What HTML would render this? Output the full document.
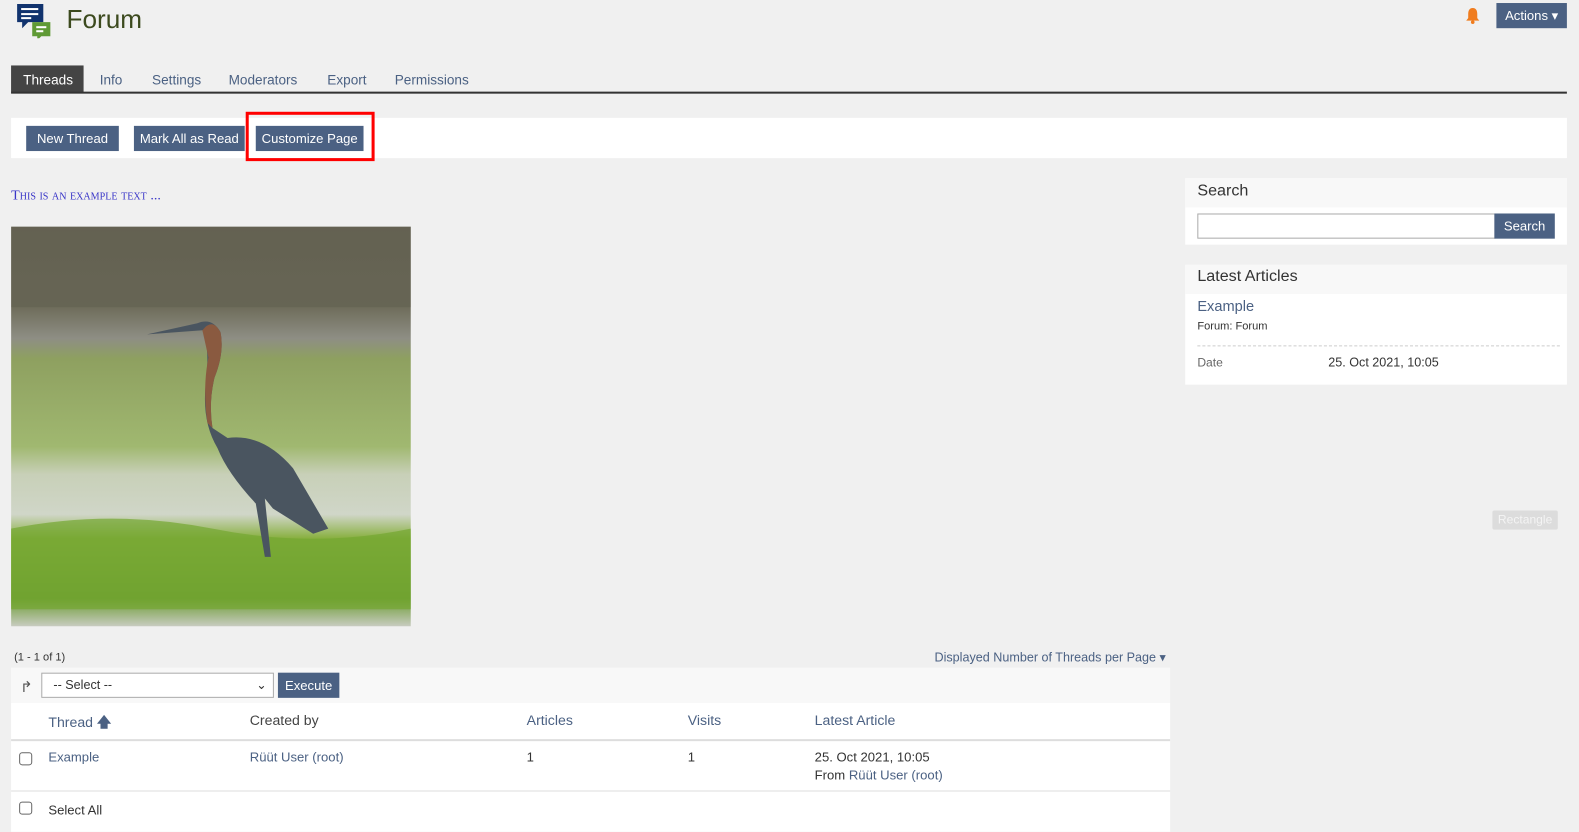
<!DOCTYPE html>
<html><head><meta charset="utf-8"><style>
*{box-sizing:border-box;margin:0;padding:0}
body{width:1579px;height:832px;background:#f0f0f0;font-family:"Liberation Sans",sans-serif;font-size:13px;color:#333;position:relative;overflow:hidden}
#w{position:absolute;left:0;top:0;width:1568px;height:826px;transform:scale(1.007);transform-origin:0 0}
.a{position:absolute}
.btn{position:absolute;background:#4b6183;color:#fff;font-size:13px;line-height:25px;text-align:center;height:25px}
.lnk{color:#4b6183}
.tab{position:absolute;top:72px;font-size:13.5px;color:#4b6183}
</style></head><body><div id="w">
<svg class="a" style="left:16px;top:3px" width="36" height="35" viewBox="0 0 36 35">
<path d="M1 1h26v18H12l-6 6v-6H1z" fill="#11336e"/>
<rect x="5" y="5" width="17" height="2" fill="#fff"/><rect x="5" y="10" width="17" height="2" fill="#fff"/><rect x="5" y="14" width="10" height="2" fill="#fff"/>
<path d="M16 19h18v14h-9l-4 4v-4h-5z" fill="#5f9a35"/>
<rect x="20" y="23" width="10" height="2" fill="#fff"/><rect x="20" y="27" width="7" height="2" fill="#fff"/>
</svg>
<div class="a" style="left:66px;top:4px;font-size:26px;color:#3c4a1e">Forum</div>
<svg class="a" style="left:1455px;top:7px" width="15" height="17" viewBox="0 0 15 17"><path d="M7.5 1C4 1 3 4 3 7v4L1 13.5h13L12 11V7c0-3-1-6-4.5-6z" fill="#f07c1e"/><circle cx="7.5" cy="15" r="1.8" fill="#f07c1e"/></svg>
<div class="btn" style="left:1486px;top:3px;width:70px;height:25px">Actions &#9662;</div>

<div class="a" style="left:11px;top:65px;width:72px;height:27px;background:#444"></div>
<div class="tab" style="left:23px;color:#fff">Threads</div>
<div class="tab" style="left:99px">Info</div>
<div class="tab" style="left:151px">Settings</div>
<div class="tab" style="left:227px">Moderators</div>
<div class="tab" style="left:325px">Export</div>
<div class="tab" style="left:392px">Permissions</div>
<div class="a" style="left:11px;top:91px;width:1545px;height:2px;background:#333"></div>

<div class="a" style="left:11px;top:117px;width:1545px;height:40px;background:#fff"></div>
<div class="btn" style="left:26px;top:125px;width:92px">New Thread</div>
<div class="btn" style="left:133px;top:125px;width:110px">Mark All as Read</div>
<div class="a" style="left:244px;top:111px;width:128px;height:49px;border:3px solid #f00"></div>
<div class="btn" style="left:254px;top:125px;width:107px">Customize Page</div>

<div class="a" style="left:11px;top:187px;font-family:'Liberation Serif',serif;font-variant:small-caps;font-size:14px;color:#3a36c8">This is an example text ...</div>

<svg class="a" style="left:11px;top:225px" width="397" height="397" viewBox="0 0 397 397">
<defs><linearGradient id="g" x1="0" y1="0" x2="0" y2="1">
<stop offset="0" stop-color="#6a6656"/><stop offset=".2" stop-color="#6e6c5a"/><stop offset=".28" stop-color="#8e8e84"/><stop offset=".33" stop-color="#8ea060"/><stop offset=".55" stop-color="#a0b870"/><stop offset=".62" stop-color="#c8d0b8"/><stop offset=".72" stop-color="#d0d6c8"/><stop offset=".78" stop-color="#88b040"/><stop offset=".93" stop-color="#6a9a30"/><stop offset="1" stop-color="#c8ccc0"/></linearGradient></defs>
<rect width="397" height="397" fill="url(#g)"/>
<rect x="0" y="0" width="397" height="80" fill="#55554a" opacity=".3"/>
<path d="M0 300Q100 280 200 300T397 300V380H0z" fill="#74a630" opacity=".7"/>
<path d="M135 107L185 96Q200 90 208 105Q212 125 202 150Q196 175 200 200L215 210Q250 205 280 240L315 300L300 305L260 280L252 270L258 328H252L243 275Q215 245 205 220Q190 195 193 160Q198 120 190 103Z" fill="#4a5560"/>
<path d="M190 103Q200 90 208 105Q212 125 202 150Q196 175 200 200L195 195Q190 160 196 130Z" fill="#8a5a40"/>
</svg>

<div class="a" style="left:14px;top:647px;font-size:11px">(1 - 1 of 1)</div>
<div class="a lnk" style="left:928px;top:645px;font-size:12.5px">Displayed Number of Threads per Page &#9662;</div>
<div class="a" style="left:11px;top:663px;width:1151px;height:35px;background:#f8f8f8"></div>
<div class="a" style="left:20px;top:673px;font-size:15px;color:#555">&#8625;</div>
<div class="a" style="left:41px;top:668px;width:231px;height:25px;background:#fff;border:1px solid #aaa;font-size:12.5px;line-height:23px;padding-left:11px">-- Select --<span style="position:absolute;right:6px">&#8964;</span></div>
<div class="btn" style="left:276px;top:668px;width:61px;height:25px">Execute</div>
<div class="a" style="left:11px;top:698px;width:1151px;height:128px;background:#fff"></div>
<div class="a lnk" style="left:48px;top:707px;font-size:14px">Thread <b>&#129093;</b></div>
<div class="a" style="left:248px;top:707px;font-size:14px;color:#444">Created by</div>
<div class="a lnk" style="left:523px;top:707px;font-size:14px">Articles</div>
<div class="a lnk" style="left:683px;top:707px;font-size:14px">Visits</div>
<div class="a lnk" style="left:809px;top:707px;font-size:14px">Latest Article</div>
<div class="a" style="left:11px;top:734px;width:1151px;height:2px;background:#ddd"></div>
<div class="a" style="left:19px;top:747px;width:13px;height:13px;border:1px solid #666;border-radius:3px"></div>
<div class="a lnk" style="left:48px;top:744px">Example</div>
<div class="a lnk" style="left:248px;top:744px">Rüüt User (root)</div>
<div class="a" style="left:523px;top:744px">1</div>
<div class="a" style="left:683px;top:744px">1</div>
<div class="a" style="left:809px;top:744px">25. Oct 2021, 10:05</div>
<div class="a" style="left:809px;top:762px">From <span class="lnk">Rüüt User (root)</span></div>
<div class="a" style="left:11px;top:785px;width:1151px;height:1px;background:#ddd"></div>
<div class="a" style="left:19px;top:796px;width:13px;height:13px;border:1px solid #666;border-radius:3px"></div>
<div class="a" style="left:48px;top:797px">Select All</div>

<div class="a" style="left:1177px;top:177px;width:379px;height:66px;background:#fff"></div>
<div class="a" style="left:1177px;top:177px;width:379px;height:29px;background:#f8f8f8"></div>
<div class="a" style="left:1189px;top:181px;font-size:16px;color:#333">Search</div>
<div class="a" style="left:1189px;top:212px;width:296px;height:25px;border:1px solid #aaa;background:#fff"></div>
<div class="btn" style="left:1484px;top:212px;width:60px">Search</div>
<div class="a" style="left:1177px;top:263px;width:379px;height:119px;background:#fff"></div>
<div class="a" style="left:1177px;top:263px;width:379px;height:29px;background:#f8f8f8"></div>
<div class="a" style="left:1189px;top:266px;font-size:16px">Latest Articles</div>
<div class="a lnk" style="left:1189px;top:297px;font-size:14.5px">Example</div>
<div class="a" style="left:1189px;top:318px;font-size:11px">Forum: Forum</div>
<div class="a" style="left:1189px;top:343px;width:360px;border-top:1px dashed #ccc"></div>
<div class="a" style="left:1189px;top:353px;font-size:12px;color:#666">Date</div>
<div class="a" style="left:1319px;top:353px;font-size:12.5px">25. Oct 2021, 10:05</div>
<div class="a" style="left:1482px;top:507px;width:65px;height:19px;background:#dcdcdc;border-radius:2px;color:#f4f4f4;font-size:12px;line-height:19px;text-align:center">Rectangle</div>
</div></body></html>
